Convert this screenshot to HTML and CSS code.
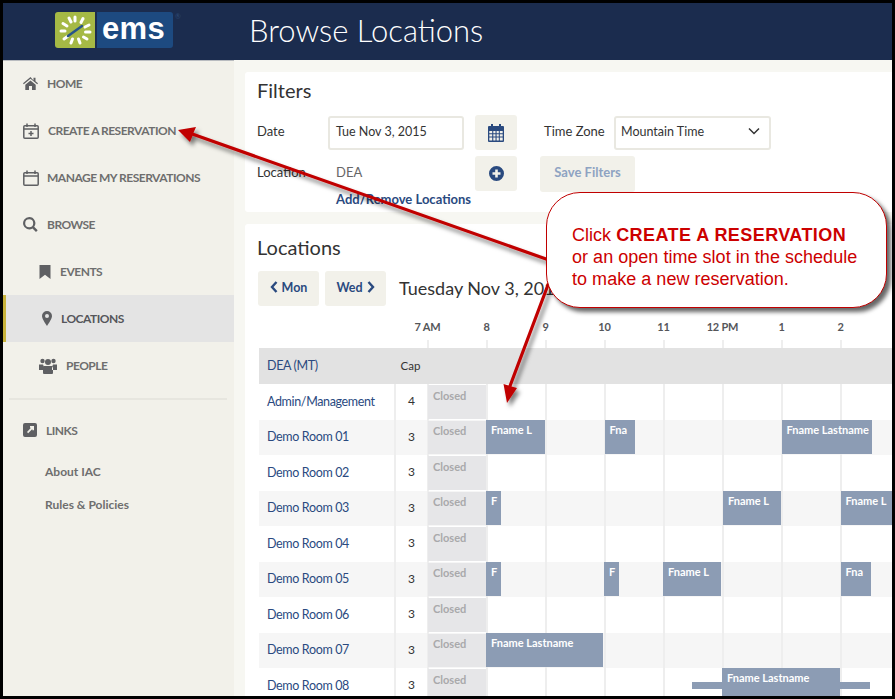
FILE: index.html
```html
<!DOCTYPE html>
<html lang="en">
    <head>
        <meta charset="UTF-8" />
        <meta name="viewport" content="width=device-width, initial-scale=1.0" />
        <link rel="stylesheet" href="styles.css">
        <title>Browse Locations</title>
    </head>
    <body>
        <div class="page">
            <div class="app">
                <header class="topbar">
                    <div class="logo">
                        <div class="logo-mark">
                            <svg width="40" height="36" viewBox="0 0 40 36">
                                <g stroke="#fff" stroke-width="3" stroke-linecap="round">
                                    <line x1="20" y1="5" x2="20" y2="9" />
                                    <line x1="28" y1="6.5" x2="26" y2="10.5" />
                                    <line x1="34" y1="13" x2="30" y2="15" />
                                    <line x1="35" y1="20" x2="30.5" y2="20" />
                                    <line x1="32" y1="27" x2="28.500" y2="25" />
                                    <line x1="25" y1="31" x2="23.500" y2="27" />
                                    <line x1="16" y1="31" x2="17.500" y2="27" />
                                    <line x1="9" y1="27" x2="12.500" y2="24.500" />
                                    <line x1="6" y1="19" x2="10" y2="19" />
                                    <line x1="8" y1="11.500" x2="12" y2="14" />
                                    <line x1="14" y1="6" x2="16" y2="10" />
                                </g>
                                <line x1="13" y1="24" x2="27" y2="14" stroke="#27548a" stroke-width="2.500" stroke-linecap="round" />
                            </svg>
                        </div>
                        <div class="logo-word">ems</div>
                        <span class="logo-reg">®</span>
                    </div>
                    <h1 class="page-title">Browse Locations</h1>
                </header>

                <div class="body-wrap">
                    <nav class="sidebar">
                        <a class="nav-item">
                            <svg class="nav-icon" width="15" height="13" viewBox="0 0 15 13"><path d="M7.500 0 0 6.300l.8 1L7.500 1.800l6.700 5.500.8-1-2.500-2.100V.8h-2v2.700zM2.300 7.800V13h3.700V9h3v4h3.700V7.800L7.500 3.500z" /></svg>
                            HOME
                        </a>
                        <a class="nav-item">
                            <svg class="nav-icon nav-icon-line" width="16" height="16" viewBox="0 0 16 16"><rect x=".8" y="2.800" width="14.400" height="12.400" rx="1" /><path d="M.8 6h14.400M4 .5v3.500M12 .5v3.500M8 8v5M5.500 10.500h5" /></svg>
                            <span class="nav-shift">CREATE A RESERVATION</span>
                        </a>
                        <a class="nav-item">
                            <svg class="nav-icon nav-icon-line" width="16" height="16" viewBox="0 0 16 16"><rect x=".8" y="2.800" width="14.400" height="12.400" rx="1" /><path d="M.8 6h14.400M4 .5v3.500M12 .5v3.500" /></svg>
                            MANAGE MY RESERVATIONS
                        </a>
                        <a class="nav-item">
                            <svg class="nav-icon" width="15" height="15" viewBox="0 0 15 15"><path fill-rule="evenodd" d="M6.200 0a6.200 6.200 0 0 1 5 9.800l3.500 3.500-1.700 1.700-3.500-3.500A6.200 6.200 0 1 1 6.200 0zm0 2.200a4 4 0 1 0 0 8 4 4 0 0 0 0-8z" /></svg>
                            BROWSE
                        </a>
                        <a class="nav-item nav-sub">
                            <svg class="nav-icon" width="12" height="14" viewBox="0 0 12 14"><path d="M.5 0h11v14L6 9.800.5 14z" /></svg>
                            EVENTS
                        </a>
                        <a class="nav-item nav-sub nav-active">
                            <svg class="nav-icon" width="10" height="15" viewBox="0 0 10 15"><path fill-rule="evenodd" d="M5 0a5 5 0 0 1 5 5c0 2.500-3 7-5 10C3 12 0 7.500 0 5a5 5 0 0 1 5-5zm0 3a2 2 0 1 0 0 4 2 2 0 0 0 0-4z" /></svg>
                            LOCATIONS
                        </a>
                        <a class="nav-item nav-sub">
                            <svg class="nav-icon" width="18" height="16" viewBox="0 0 18 16"><circle cx="3.500" cy="3" r="2.200" /><circle cx="14.500" cy="3" r="2.200" /><circle cx="9" cy="4" r="3" /><path d="M0 6.500h4l1 2.500v3H0zM18 6.500h-4l-1 2.500v3h5zM5 8h8l1 2v5a1 1 0 0 1-1 1H5a1 1 0 0 1-1-1v-5z" /></svg>
                            PEOPLE
                        </a>
                        <div class="nav-divider"></div>
                        <a class="nav-item">
                            <svg class="nav-icon" width="14" height="14" viewBox="0 0 14 14"><path fill-rule="evenodd" d="M2 0h10a2 2 0 0 1 2 2v10a2 2 0 0 1-2 2H2a2 2 0 0 1-2-2V2a2 2 0 0 1 2-2zm5 3v1.800h1L4 9l1.200 1.200L9.300 6v1.200H11V3z" /></svg>
                            LINKS
                        </a>
                        <div class="nav-links">
                            <a class="nav-link">About IAC</a>
                            <a class="nav-link">Rules &amp; Policies</a>
                        </div>
                    </nav>

                    <main class="content">
                        <section class="card filters">
                            <h2 class="card-title">Filters</h2>
                            <div class="filter-row">
                                <label class="filter-label">Date</label>
                                <div class="date-input">Tue Nov 3, 2015</div>
                                <button class="icon-btn">
                                    <svg width="16" height="18" viewBox="0 0 16 18"><path fill="#2a4a7f" fill-rule="evenodd" d="M3 0h2v2h6V0h2v2h2a1 1 0 0 1 1 1v14a1 1 0 0 1-1 1H1a1 1 0 0 1-1-1V3a1 1 0 0 1 1-1h2zM1.300 7v2.200h2.900V7zm4 0v2.200h2.200V7zm3.300 0v2.200h2.200V7zm3.200 0v2.200h2.900V7zM1.300 10.200v2.300h2.900v-2.300zm4 0v2.300h2.200v-2.300zm3.300 0v2.300h2.200v-2.300zm3.200 0v2.300h2.900v-2.300zM1.300 13.500v3h2.900v-3zm4 0v3h2.200v-3zm3.300 0v3h2.200v-3zm3.200 0v3h2.900v-3z" /></svg>
                                </button>
                                <label class="filter-label tz-label">Time Zone</label>
                                <div class="select-box">
                                    Mountain Time
                                    <svg width="12" height="8" viewBox="0 0 12 8"><path d="M1 1.500l5 5 5-5" fill="none" stroke="#333" stroke-width="1.500" /></svg>
                                </div>
                            </div>
                            <div class="filter-row filter-row-2">
                                <label class="filter-label">Location</label>
                                <div class="location-value">DEA</div>
                                <button class="icon-btn">
                                    <svg width="15" height="15" viewBox="0 0 15 15"><path fill="#2a4a7f" fill-rule="evenodd" d="M7.500 0a7.500 7.500 0 1 1 0 15 7.500 7.500 0 0 1 0-15zM6.200 3.500v2.700H3.500v2.600h2.700v2.700h2.600V8.800h2.700V6.200H8.800V3.500z" /></svg>
                                </button>
                                <button class="save-btn">Save Filters</button>
                            </div>
                            <a class="add-link">Add/Remove Locations</a>
                        </section>

                        <section class="card locations">
                            <h2 class="card-title">Locations</h2>
                            <div class="day-nav">
                                <button class="day-btn">
                                    <svg width="8" height="12" viewBox="0 0 8 12"><path d="M6.500 1 2 6l4.500 5" fill="none" stroke="#2a4a7f" stroke-width="2.400" /></svg>
                                    Mon
                                </button>
                                <button class="day-btn">
                                    Wed
                                    <svg width="8" height="12" viewBox="0 0 8 12"><path d="M1.500 1 6 6l-4.500 5" fill="none" stroke="#2a4a7f" stroke-width="2.400" /></svg>
                                </button>
                                <div class="day-label">Tuesday Nov 3, 2015</div>
                            </div>

                            <div class="axis">
                                <div class="hour">7 AM</div>
                                <div class="hour">8</div>
                                <div class="hour">9</div>
                                <div class="hour">10</div>
                                <div class="hour">11</div>
                                <div class="hour">12 PM</div>
                                <div class="hour">1</div>
                                <div class="hour">2</div>
                            </div>

                            <div class="row row-head">
                                <div class="room">DEA (MT)</div>
                                <div class="cap cap-head">Cap</div>
                            </div>

                            <div class="row">
                                <div class="room">Admin/Management</div>
                                <div class="cap cap-line">4</div>
                                <div class="track"><div class="closed">Closed</div></div>
                            </div>
                            <div class="row row-alt">
                                <div class="room">Demo Room 01</div>
                                <div class="cap cap-line">3</div>
                                <div class="track">
                                    <div class="closed">Closed</div>
                                    <div class="booking" style="left: 59px; width: 59px">Fname L</div>
                                    <div class="booking" style="left: 177.500px; width: 30px">Fna</div>
                                    <div class="booking" style="left: 354.500px; width: 90px">Fname Lastname</div>
                                </div>
                            </div>
                            <div class="row">
                                <div class="room">Demo Room 02</div>
                                <div class="cap cap-line">3</div>
                                <div class="track"><div class="closed">Closed</div></div>
                            </div>
                            <div class="row row-alt">
                                <div class="room">Demo Room 03</div>
                                <div class="cap cap-line">3</div>
                                <div class="track">
                                    <div class="closed">Closed</div>
                                    <div class="booking" style="left: 59px; width: 15px">F</div>
                                    <div class="booking" style="left: 296px; width: 58px">Fname L</div>
                                    <div class="booking" style="left: 413.500px; width: 60px">Fname L</div>
                                </div>
                            </div>
                            <div class="row">
                                <div class="room">Demo Room 04</div>
                                <div class="cap cap-line">3</div>
                                <div class="track"><div class="closed">Closed</div></div>
                            </div>
                            <div class="row row-alt">
                                <div class="room">Demo Room 05</div>
                                <div class="cap cap-line">3</div>
                                <div class="track">
                                    <div class="closed">Closed</div>
                                    <div class="booking" style="left: 59px; width: 15px">F</div>
                                    <div class="booking" style="left: 177px; width: 15px">F</div>
                                    <div class="booking" style="left: 236px; width: 58px">Fname L</div>
                                    <div class="booking" style="left: 413.500px; width: 30px">Fna</div>
                                </div>
                            </div>
                            <div class="row">
                                <div class="room">Demo Room 06</div>
                                <div class="cap cap-line">3</div>
                                <div class="track"><div class="closed">Closed</div></div>
                            </div>
                            <div class="row row-alt">
                                <div class="room">Demo Room 07</div>
                                <div class="cap cap-line">3</div>
                                <div class="track">
                                    <div class="closed">Closed</div>
                                    <div class="booking" style="left: 59px; width: 117px">Fname Lastname</div>
                                </div>
                            </div>
                            <div class="row">
                                <div class="room">Demo Room 08</div>
                                <div class="cap cap-line">3</div>
                                <div class="track">
                                    <div class="closed">Closed</div>
                                    <div class="setup" style="left: 265px; width: 178px"></div>
                                    <div class="booking" style="left: 295px; width: 118px">Fname Lastname</div>
                                </div>
                            </div>
                        </section>
                    </main>
                </div>
            </div>

            <svg class="arrows" width="895" height="699" viewBox="0 0 895 699">
                <defs>
                    <filter id="arrow-shadow" x="-10%" y="-20%" width="125%" height="150%">
                        <feDropShadow dx="3" dy="4" stdDeviation="2" flood-color="#000" flood-opacity="0.5" />
                    </filter>
                </defs>
                <g filter="url(#arrow-shadow)" fill="#c00000">
                    <path d="M178 130 196 127 193.500 132.800 548 258 547 261 192.500 135.800 190 142z" />
                    <path d="M507 403 503.500 384 508.500 385.500 547 283 550 284 511.500 386.500 517 388z" />
                </g>
            </svg>

            <div class="callout">
                Click <b>CREATE A RESERVATION</b><br />
                or an open time slot in the schedule<br />
                to make a new reservation.
            </div>
        </div>
    </body>
</html>
```

FILE: styles.css
```css
* {
    margin: 0;
    padding: 0;
    box-sizing: border-box;
    font-family: "Lato", "Liberation Sans", sans-serif;
}

body {
    background-color: #000;
}

.page {
    position: relative;
    width: 895px;
    height: 699px;
    padding: 3px;
    background-color: #000;
}

.app {
    display: flex;
    flex-direction: column;
    width: 100%;
    height: 100%;
    overflow: hidden;
    background-color: #f7f7f2;
}

/* top bar */
.topbar {
    display: flex;
    align-items: center;
    flex: 0 0 57px;
    padding-left: 52px;
    background-color: #1b2c4e;
}

.logo {
    display: flex;
    width: 194px;
    height: 36px;
    margin-top: -3px;
    align-items: stretch;
}

.logo-mark {
    width: 40px;
    background-color: #a5b945;
    border-radius: 3px 0 0 3px;
}

.logo-mark svg {
    display: block;
}

.logo-word {
    width: 76px;
    margin-left: 2px;
    padding-left: 5px;
    background-color: #1d4a80;
    border-radius: 0 3px 3px 0;
    color: #fff;
    font-family: "Liberation Sans", sans-serif;
    font-size: 31px;
    font-weight: bold;
    line-height: 33px;
    letter-spacing: 0.3px;
}

.logo-reg {
    margin-left: 2px;
    color: #2d4a75;
    font-size: 7px;
}

.page-title {
    margin-bottom: 4px;
    color: #fff;
    font-size: 31px;
    font-weight: 300;
    line-height: 40px;
}

.body-wrap {
    display: flex;
    flex: 1;
    min-height: 0;
}

/* sidebar */
.sidebar {
    flex: 0 0 231px;
    background-color: #f2f1ea;
    box-shadow: inset 0 1px 0 #b9bcc0;
}

.nav-item {
    display: flex;
    align-items: center;
    height: 47px;
    padding-left: 20px;
    color: #6e6e6e;
    font-size: 12px;
    font-weight: 700;
    letter-spacing: -0.500px;
}

.nav-icon {
    flex: none;
    margin-right: 9px;
    fill: #5f6063;
}

.nav-icon-line {
    margin-right: 8px;
    fill: none;
    stroke: #5f6063;
    stroke-width: 1.500;
}

.nav-shift {
    margin-left: 1px;
}

.nav-sub {
    padding-left: 36px;
}

.nav-active {
    padding-left: 36px;
    border-left: 3px solid #c8b33c;
    background-color: #e4e4e4;
    color: #55565a;
}

.nav-divider {
    height: 2px;
    margin: 8.500px 7px 7px 6px;
    background-color: #e7e6df;
}

.nav-links {
    padding-top: 10px;
}

.nav-link {
    display: block;
    height: 33.500px;
    padding-left: 42px;
    color: #6e6e6e;
    font-size: 12px;
    font-weight: 700;
    line-height: 16px;
}

/* cards */
.content {
    flex: 1;
    min-width: 0;
    padding: 12px 0 0 11px;
}

.card {
    background-color: #fff;
    border-radius: 3px 0 0 3px;
    padding-left: 12px;
}

.card-title {
    color: #333;
    font-size: 20px;
    font-weight: 400;
    line-height: 24px;
}

.filters {
    height: 140px;
    padding-top: 6px;
}

.filter-row {
    display: flex;
    align-items: center;
    height: 35px;
    margin-top: 13px;
    color: #333;
    font-size: 13px;
}

.filter-row-2 {
    margin-top: 6px;
}

.filter-label {
    width: 71px;
    padding-bottom: 3px;
}

.date-input {
    width: 136px;
    height: 34px;
    padding-left: 6px;
    border: 2px solid #e9e8e1;
    border-radius: 3px;
    font-size: 12.500px;
    line-height: 27px;
}

.icon-btn {
    display: flex;
    align-items: center;
    justify-content: center;
    width: 42px;
    height: 35px;
    margin-left: 11px;
    border: none;
    border-radius: 3px;
    background-color: #f2f1ea;
}

.tz-label {
    width: 70px;
    margin-left: 27px;
}

.select-box {
    display: flex;
    align-items: center;
    justify-content: space-between;
    width: 157px;
    height: 34px;
    padding: 0 9px 3px 5px;
    border: 2px solid #e9e8e1;
    border-radius: 3px;
    font-size: 12.500px;
}

.location-value {
    width: 136px;
    padding-bottom: 3px;
    padding-left: 8px;
    color: #666;
}

.save-btn {
    width: 95px;
    height: 36px;
    margin-left: 23px;
    padding-bottom: 3px;
    border: none;
    border-radius: 3px;
    background-color: #f2f1ea;
    color: #8ea3c2;
    font-size: 13px;
    font-weight: 700;
}

.add-link {
    display: block;
    margin: 0 0 0 79px;
    color: #2a4a7f;
    font-size: 13px;
    font-weight: 700;
    line-height: 16px;
}

.locations {
    height: 480px;
    margin-top: 12px;
    padding: 11px 0 0 14px;
}

.locations .card-title {
    margin-left: -2px;
}

.day-nav {
    display: flex;
    align-items: center;
    margin-top: 12px;
    margin-left: -1px;
}

.day-btn {
    display: flex;
    align-items: center;
    justify-content: center;
    gap: 4px;
    width: 61px;
    height: 35px;
    margin-right: 6px;
    padding-bottom: 3px;
    border: none;
    border-radius: 3px;
    background-color: #f2f1ea;
    color: #2a4a7f;
    font-size: 12.500px;
    font-weight: 700;
}

.day-label {
    margin-bottom: 2px;
    margin-left: 7px;
    color: #333;
    font-size: 18px;
}

/* schedule */
.axis {
    display: flex;
    padding-left: 139px;
}

.hour {
    display: flex;
    flex: 0 0 59px;
    flex-direction: column;
    align-items: center;
    height: 42px;
    padding-top: 14px;
    color: #55565a;
    font-size: 11px;
    font-weight: 700;
    letter-spacing: -0.200px;
    line-height: 14px;
}

.hour::after {
    content: "";
    width: 2px;
    height: 8px;
    margin-top: auto;
    background-color: #eee;
}

.row {
    display: grid;
    grid-template-columns: 135px 33px 1fr;
    height: 35.500px;
    align-items: center;
    color: #2a4a7f;
    font-size: 12.500px;
    letter-spacing: -0.350px;
}

.row-head {
    height: 36px;
    background-color: #e2e2e2;
}

.row-alt {
    background-color: #f6f6f6;
}

.room {
    padding-bottom: 1px;
    padding-left: 8px;
}

.cap {
    color: #333;
    line-height: 33.500px;
    text-align: center;
}

.cap-head {
    font-size: 11.500px;
    letter-spacing: 0;
}

.cap-line {
    height: 100%;
    border-left: 2px solid #eee;
    font-size: 12px;
    letter-spacing: 0;
}

.track {
    position: relative;
    height: 100%;
    background-image: linear-gradient(to right, #eee 2px, transparent 2px);
    background-size: 59px 100%;
}

.closed {
    position: absolute;
    top: 1px;
    bottom: 1px;
    left: 1px;
    width: 58px;
    padding: 3.500px 0 0 5px;
    background-color: #e6e6e8;
    color: #a9a9ab;
    font-size: 11px;
    font-weight: 700;
    letter-spacing: 0;
    line-height: 14px;
}

.booking {
    position: absolute;
    top: 0;
    bottom: 1px;
    padding: 3px 0 0 5px;
    overflow: hidden;
    background-color: #8c9cb4;
    color: #fff;
    font-size: 11px;
    font-weight: 700;
    letter-spacing: 0;
    line-height: 14px;
    white-space: nowrap;
}

.setup {
    position: absolute;
    top: 14px;
    height: 7px;
    background-color: #8c9cb4;
}

/* annotation on top of the screenshot */
.arrows {
    position: absolute;
    top: 0;
    left: 0;
    pointer-events: none;
}

.callout {
    position: absolute;
    top: 192px;
    left: 546px;
    width: 341px;
    height: 116px;
    padding: 30.500px 0 0 25px;
    border: 1px solid #c00000;
    border-radius: 34px;
    background-color: #fff;
    box-shadow: 4px 4px 4px rgba(0, 0, 0, 0.6);
    color: #cc0000;
    font-family: "Liberation Sans", sans-serif;
    font-size: 18px;
    letter-spacing: 0.030px;
    line-height: 22px;
}

.callout b {
    font-family: "Liberation Sans", sans-serif;
    letter-spacing: 0.430px;
}
```
